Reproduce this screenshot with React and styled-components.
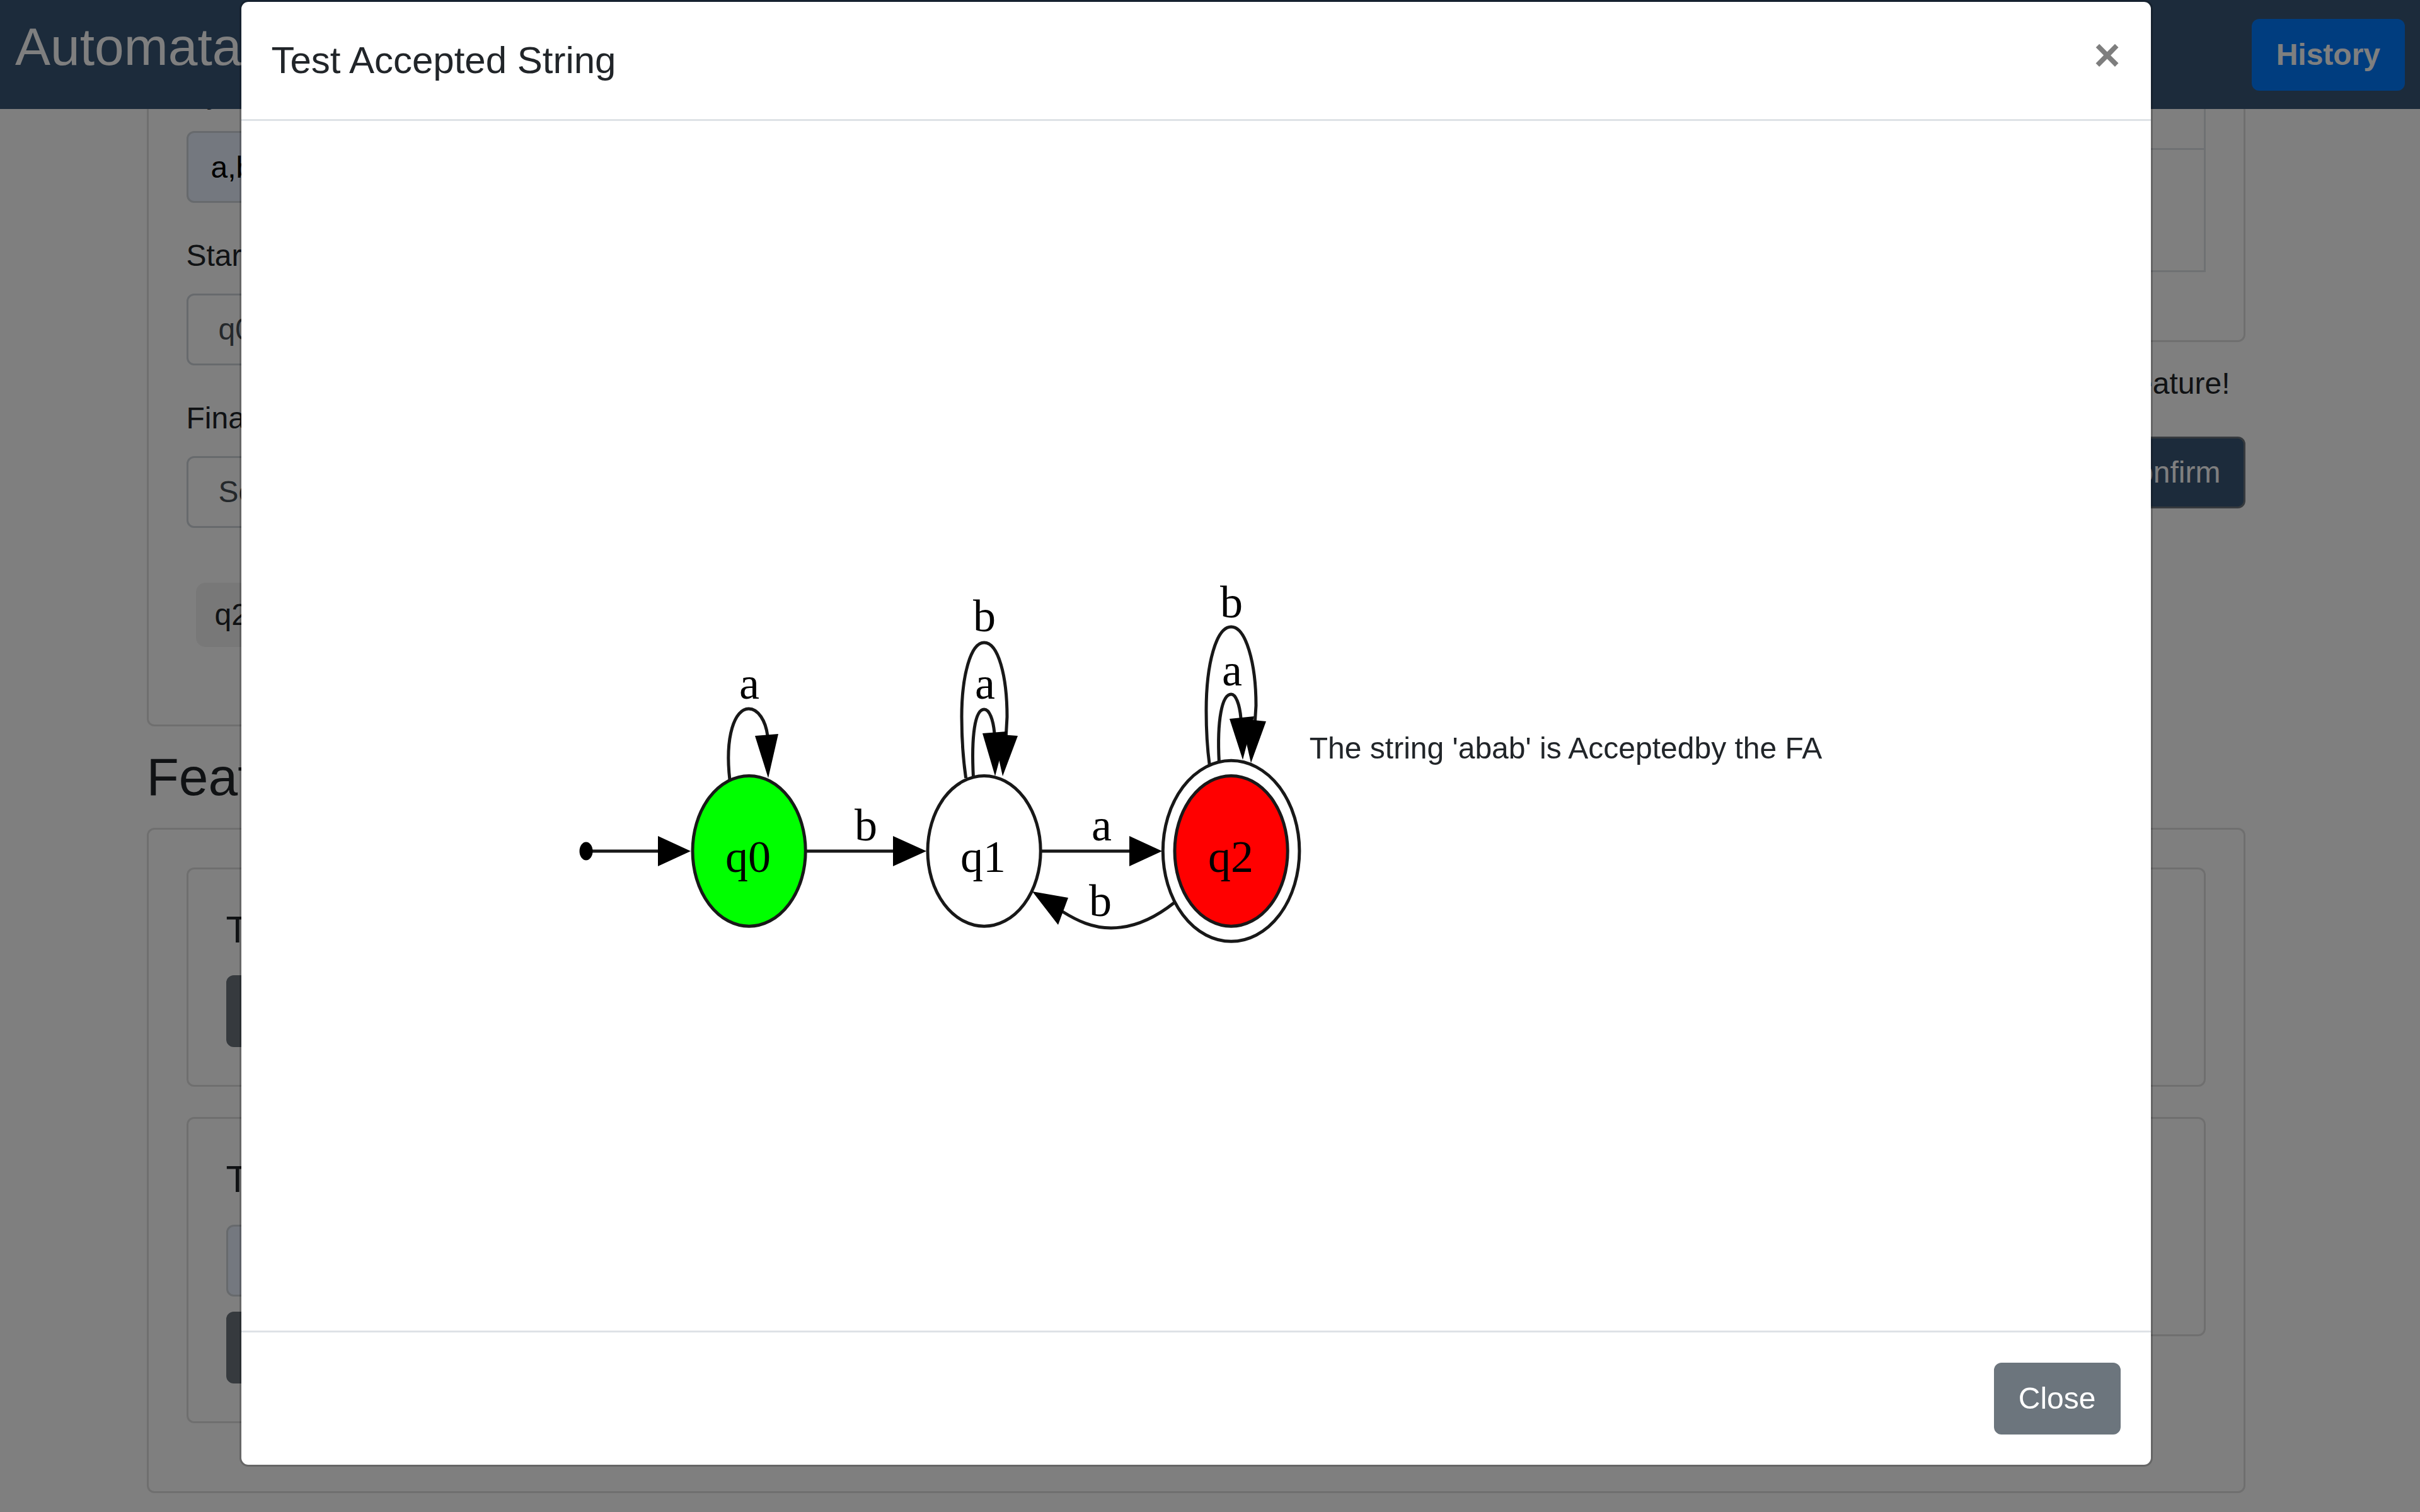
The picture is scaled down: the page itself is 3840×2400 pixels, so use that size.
import React from "react";
import styled, { createGlobalStyle } from "styled-components";

const GlobalStyle = createGlobalStyle`
  *, *::before, *::after { box-sizing: border-box; }
  body {
    margin: 0;
    background: #fff;
    color: #212529;
    font-family: "Liberation Sans", Arial, sans-serif;
    font-size: 48px;
    line-height: 72px;
  }
  button, input, select { font: inherit; margin: 0; }
`;

const Navbar = styled.header`
  position: fixed;
  top: 0;
  left: 0;
  right: 0;
  z-index: 10;
  display: flex;
  align-items: center;
  justify-content: space-between;
  padding: 24px;
  background: #385676;
`;

const Brand = styled.h1`
  margin: 0 0 24px;
  color: #fff;
  font-size: 84px;
  font-weight: 400;
  line-height: 101px;
`;

const tones = {
  primary: ["#007bff", "#007bff"],
  secondary: ["#6c757d", "#6c757d"],
  confirm: ["#385676", "#6c757d"],
};

const Button = styled.button`
  padding: 18px 36px;
  border: 3px solid ${(p) => tones[p.$tone || "secondary"][1]};
  border-radius: 12px;
  background: ${(p) => tones[p.$tone || "secondary"][0]};
  color: #fff;
  font-weight: ${(p) => (p.$bold ? 700 : 400)};
`;

const Page = styled.div`
  padding-right: 45px;
`;

const Container = styled.main`
  max-width: 3420px;
  margin: 0 auto;
  padding: 49px 45px 30px;
`;

const Columns = styled.div`
  display: grid;
  grid-template-columns: 1fr 1fr;
  column-gap: ${(p) => p.$gap}px;
  align-items: start;
`;

const Stack = styled.div`
  display: flex;
  flex-direction: column;
`;

const Card = styled.section`
  padding: 60px;
  border: 3px solid rgba(0, 0, 0, 0.125);
  border-radius: 12px;
  background: #fff;
`;

const FeatureCard = styled(Card)`
  display: flex;
  flex-direction: column;
  align-items: flex-start;
  margin-bottom: 48px;
`;

const CardTitle = styled.h3`
  margin: 0 0 36px;
  font-size: 60px;
  font-weight: 400;
  line-height: 72px;
`;

const SectionTitle = styled.h2`
  margin: 30px 0;
  font-size: 84px;
  font-weight: 400;
  line-height: 101px;
`;

const Field = styled.div`
  display: flex;
  flex-direction: column;
  gap: 24px;
  margin-bottom: 48px;
`;

const TextInput = styled.input`
  width: 100%;
  height: 114px;
  padding: 18px 36px;
  border: 3px solid #ced4da;
  border-radius: 12px;
  background: #e8f0fe;
  color: #000;
`;

const TestInput = styled(TextInput)`
  margin-bottom: 24px;
`;

const Select = styled.select`
  appearance: none;
  width: 100%;
  height: 114px;
  padding: 18px 48px;
  border: 3px solid #ced4da;
  border-radius: 12px;
  background: #fff;
  color: #495057;
`;

const Chips = styled.div`
  display: flex;
  padding: 24px 0 48px;
`;

const Chip = styled.span`
  margin: 15px;
  padding: 15px 30px;
  border-radius: 15px;
  background: #f0f0f0;
`;

const Table = styled.table`
  width: 100%;
  margin-bottom: 48px;
  border-collapse: collapse;
`;

const Cell = styled.td`
  height: ${(p) => (p.$tall ? 194 : 123)}px;
  padding: 36px;
  border: 3px solid #dee2e6;
`;

const Actions = styled.div`
  display: flex;
  flex-direction: column;
  align-items: flex-end;
  gap: 48px;
  margin-top: 30px;
`;

const Notice = styled.p`
  margin: 0;
  padding-right: 24px;
`;

const Backdrop = styled.div`
  position: fixed;
  inset: 0;
  z-index: 20;
  padding-right: 45px;
  background: rgba(0, 0, 0, 0.5);
`;

const Dialog = styled.div`
  width: 80%;
  margin: 0 auto;
  border: 3px solid rgba(0, 0, 0, 0.2);
  border-radius: 14px;
  background: #fff;
  background-clip: padding-box;
`;

const DialogHeader = styled.div`
  display: flex;
  align-items: flex-start;
  justify-content: space-between;
  padding: 48px;
  border-bottom: 3px solid #dee2e6;
`;

const DialogTitle = styled.h2`
  margin: 0;
  font-size: 60px;
  font-weight: 400;
  line-height: 90px;
`;

const CloseIcon = styled.button`
  padding: 0;
  border: 0;
  background: transparent;
  color: #000;
  font-size: 72px;
  font-weight: 700;
  line-height: 72px;
  opacity: 0.5;
`;

const DialogBody = styled.div`
  display: flex;
  align-items: center;
  justify-content: center;
  min-height: 80vh;
  padding: 120px 48px 48px;
`;

const Result = styled.p`
  margin: 0;
`;

const DialogFooter = styled.div`
  display: flex;
  justify-content: flex-end;
  padding: 48px;
  border-top: 3px solid #dee2e6;
`;

const Graph = styled.svg`
  width: 1174px;
  max-width: 100%;
  font-family: "Liberation Serif", "Times New Roman", serif;
  font-size: 72px;
`;

const labels = [
  ["a", 285, 241],
  ["q0", 283, 516],
  ["b", 470, 466],
  ["b", 658, 134],
  ["a", 659, 241],
  ["q1", 656, 516],
  ["a", 844, 466],
  ["b", 842, 586],
  ["b", 1050, 112],
  ["a", 1051, 220],
  ["q2", 1049, 516],
];

const edges = [
  "M254 370C246 300 262 257 284 257C299 257 311 276 314 300",
  "M640.5 366C637 300 643 258 657.6 258C666 258 672 274 674 296",
  "M628.6 367C624 335 622 300 622 270C622 205 636 152 657.6 152C680 152 694 205 694 270L692.4 299",
  "M1030.4 341C1027 275 1035 234 1049.6 234C1057 234 1063 250 1065 272",
  "M1015.2 346C1011 315 1010 285 1010 260C1010 185 1026 127 1049.6 127C1073 127 1089 185 1089 252L1087.5 276",
  "M959 565C925 592 890 605 859 605C830 605 806 594 782 579",
];

const straightEdges = ["M26 483H142", "M374 483H514", "M748 483H889"];

const arrows = [
  "140,459 192,483 140,507",
  "513,459 566,483 513,507",
  "888,459 940,483 888,507",
  "294,300 331,297 315,367",
  "655,296 694,293 675,364",
  "672,297 711,300 687,364",
  "1047,273 1086,269 1068,338",
  "1065,273 1105,277 1081,343",
  "791,557 775,600 734,547",
];

function AutomatonGraph() {
  return (
    <Graph viewBox="0 0 1174 640" role="img" aria-label="Finite automaton">
      <g fill="none" stroke="#181818" strokeWidth="5">
        <ellipse cx="284.6" cy="482.8" rx="89.6" ry="119.4" fill="#0f0" />
        <ellipse cx="657.6" cy="482.8" rx="89.6" ry="119.4" />
        <ellipse cx="1049.6" cy="482.8" rx="108.3" ry="143.5" />
        <ellipse cx="1049.6" cy="482.8" rx="89.6" ry="119.4" fill="#f00" />
        {edges.map((d) => (
          <path key={d} d={d} />
        ))}
        {straightEdges.map((d) => (
          <path key={d} d={d} />
        ))}
      </g>
      <ellipse cx="26" cy="483" rx="10.5" ry="14.5" />
      {arrows.map((points) => (
        <polygon key={points} points={points} />
      ))}
      {labels.map(([text, x, y]) => (
        <text key={`${x}-${y}`} x={x} y={y} textAnchor="middle">
          {text}
        </text>
      ))}
    </Graph>
  );
}

export default function App() {
  return (
    <>
      <GlobalStyle />
      <Navbar>
        <Brand>Automata</Brand>
        <Button $tone="primary" $bold>History</Button>
      </Navbar>

      <Page>
        <Container>
          <Columns $gap={90}>
            <Card>
              <Field>
                <label htmlFor="symbols">Symbols</label>
                <TextInput id="symbols" defaultValue="a,b" />
              </Field>
              <Field>
                <label htmlFor="start">Start State</label>
                <Select id="start" defaultValue="q0">
                  <option>q0</option>
                </Select>
              </Field>
              <Field>
                <label htmlFor="final">Final State</label>
                <Select id="final" defaultValue="Select">
                  <option>Select</option>
                </Select>
              </Field>
              <Chips>
                <Chip>q2</Chip>
              </Chips>
            </Card>
            <Stack>
              <Card>
                <Table>
                  <tbody>
                    <tr><Cell /><Cell /></tr>
                    <tr><Cell $tall /><Cell $tall /></tr>
                  </tbody>
                </Table>
              </Card>
              <Actions>
                <Notice>Confirm to use feature!</Notice>
                <Button $tone="confirm">Confirm</Button>
              </Actions>
            </Stack>
          </Columns>

          <SectionTitle>Features</SectionTitle>
          <Card>
            <Columns $gap={48}>
              <Stack>
                <FeatureCard>
                  <CardTitle>Test FA</CardTitle>
                  <Button>Test</Button>
                </FeatureCard>
                <FeatureCard>
                  <CardTitle as="label" htmlFor="test-string">Test String</CardTitle>
                  <TestInput id="test-string" />
                  <Button>Test</Button>
                </FeatureCard>
              </Stack>
              <Stack>
                <FeatureCard>
                  <CardTitle>Convert</CardTitle>
                  <Button>Convert</Button>
                </FeatureCard>
                <FeatureCard>
                  <CardTitle>Minimize</CardTitle>
                  <Button>Minimize</Button>
                </FeatureCard>
              </Stack>
            </Columns>
          </Card>
        </Container>
      </Page>

      <Backdrop>
        <Dialog role="dialog" aria-modal="true" aria-labelledby="dialog-title">
          <DialogHeader>
            <DialogTitle id="dialog-title">Test Accepted String</DialogTitle>
            <CloseIcon aria-label="Close">×</CloseIcon>
          </DialogHeader>
          <DialogBody>
            <AutomatonGraph />
            <Result>The string 'abab' is Acceptedby the FA</Result>
          </DialogBody>
          <DialogFooter>
            <Button>Close</Button>
          </DialogFooter>
        </Dialog>
      </Backdrop>
    </>
  );
}
